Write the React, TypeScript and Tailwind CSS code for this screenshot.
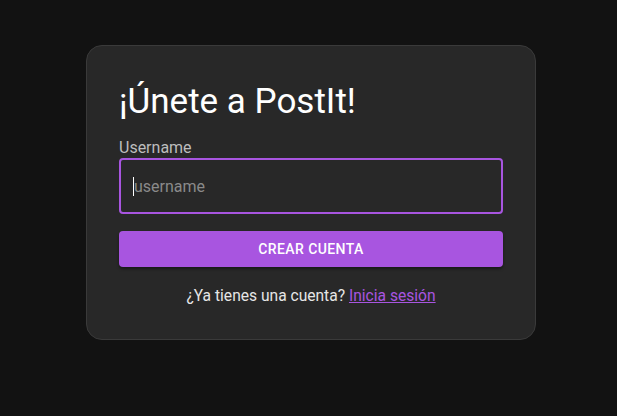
import React from "react";

export default function App() {
  return (
    <div
      className="min-h-screen w-full bg-[#121212] flex justify-center items-start pl-[5px]"
      style={{ fontFamily: "Roboto, 'Liberation Sans', sans-serif" }}
    >
      <div className="mt-[45px] w-[450px] rounded-[16px] border border-[#3a3a3a] bg-[#282828] px-8 pt-8 pb-[31px] flex flex-col">
        <h1 className="shrink-0 text-[35px] leading-[44px] text-white font-normal mt-[2px]">¡Únete a PostIt!</h1>
        <label className="shrink-0 mt-[14px] text-[16px] leading-[20px] text-[#bdbdbd]">Username</label>
        <div className="shrink-0 h-[56px] rounded-[4px] border-2 border-[#a855e0] flex items-center px-[12px]">
          <span className="w-px h-[19px] bg-white"></span>
          <input
            className="flex-1 bg-transparent outline-none text-[16px] leading-[20px] mt-[2px] text-white placeholder:text-[#8a8a8a]"
            placeholder="username"
          />
        </div>
        <button className="shrink-0 mt-[17px] h-[36px] rounded-[4px] bg-[#a855e0] text-white text-[14px] font-medium tracking-[0.4px] uppercase shadow-[0_2px_3px_rgba(0,0,0,0.4)]">
          Crear cuenta
        </button>
        <p className="shrink-0 mt-[17px] text-center text-[15.6px] leading-[24px] text-[#e6e6e6]">
          ¿Ya tienes una cuenta?{" "}
          <a href="#" className="text-[#a855e0] underline">Inicia sesión</a>
        </p>
      </div>
    </div>
  );
}
